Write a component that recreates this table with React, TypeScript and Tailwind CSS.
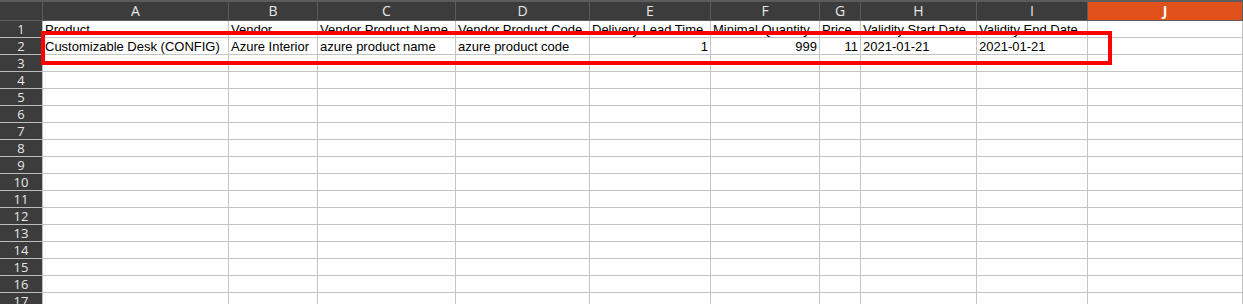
const cols = ['A', 'B', 'C', 'D', 'E', 'F', 'G', 'H', 'I', 'J']

type Cell = { text: string; right?: boolean }

const data: Record<number, Cell[]> = {
  1: [
    { text: 'Product' },
    { text: 'Vendor' },
    { text: 'Vendor Product Name' },
    { text: 'Vendor Product Code' },
    { text: 'Delivery Lead Time' },
    { text: 'Minimal Quantity' },
    { text: 'Price' },
    { text: 'Validity Start Date' },
    { text: 'Validity End Date' },
    { text: '' },
  ],
  2: [
    { text: 'Customizable Desk (CONFIG)' },
    { text: 'Azure Interior' },
    { text: 'azure product name' },
    { text: 'azure product code' },
    { text: '1', right: true },
    { text: '999', right: true },
    { text: '11', right: true },
    { text: '2021-01-21' },
    { text: '2021-01-21' },
    { text: '' },
  ],
}

const rows = Array.from({ length: 17 }, (_, i) => i + 1)

const gridCols =
  'grid grid-cols-[43px_186px_89px_138px_134px_121px_109px_41px_116px_111px_1fr]'

export default function App() {
  return (
    <div className="relative h-[304px] w-full overflow-hidden bg-white">
      {/* column headers */}
      <div className={`${gridCols} h-[21px] border-t-2 border-[#5c5c5c] bg-[#3c3c3c]`}>
        <div className="border-r border-b border-[#5c5c5c]" />
        {cols.map((c) => (
          <div
            key={c}
            className={`flex items-center justify-center border-r border-b border-[#5c5c5c] font-['Open_Sans',sans-serif] text-[14px] leading-none ${
              c === 'J' ? 'bg-[#e0501b] font-bold text-white' : 'text-[#e6e6e6]'
            }`}
          >
            {c}
          </div>
        ))}
      </div>

      {/* sheet body */}
      {rows.map((r) => (
        <div key={r} className={`${gridCols} h-[17px]`}>
          <div className="flex items-center justify-center border-r border-b border-[#bdbdbd] bg-[#3c3c3c] pt-px font-['Open_Sans',sans-serif] text-[13px] leading-none text-[#e6e6e6]">
            {r}
          </div>
          {cols.map((c, i) => {
            const cell = data[r]?.[i]
            return (
              <div
                key={c}
                className={`overflow-hidden whitespace-nowrap border-r border-b border-[#c4c4c4] px-[2px] pt-[1px] font-['Liberation_Sans',Arial,sans-serif] text-[13px] leading-[16px] text-black ${
                  cell?.right ? 'text-right' : ''
                }`}
              >
                {cell?.text}
              </div>
            )
          })}
        </div>
      ))}

      {/* highlight box around row 2 */}
      <div className="absolute left-[41px] top-[31px] h-[34px] w-[1071px] border-4 border-[#ff0000]" />
    </div>
  )
}
